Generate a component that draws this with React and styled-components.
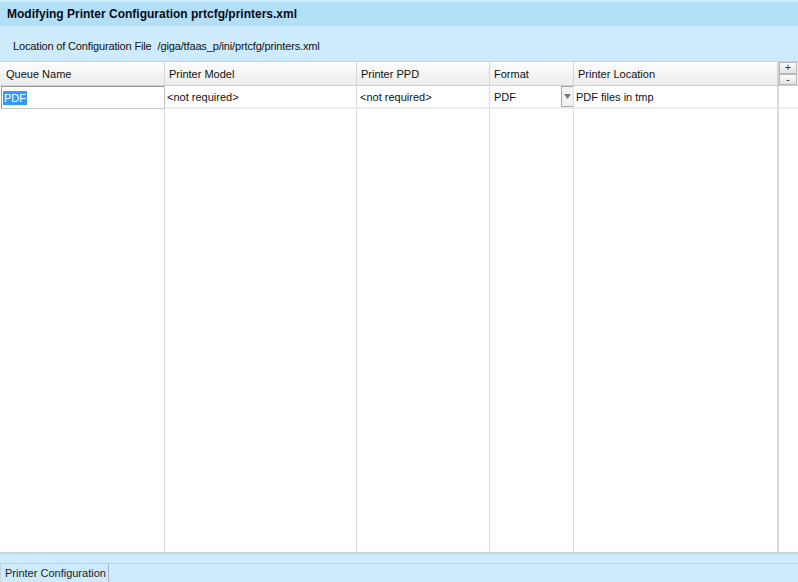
import React from "react";
import styled, { createGlobalStyle } from "styled-components";

const GlobalStyle = createGlobalStyle`
  html, body {
    margin: 0;
    padding: 0;
  }
  body {
    font-family: "Liberation Sans", Arial, sans-serif;
    background: #cdebfc;
    color: #000;
  }
`;

const columns = [
  { title: "Queue Name", width: 165, pad: 6 },
  { title: "Printer Model", width: 192, pad: 4 },
  { title: "Printer PPD", width: 133, pad: 4 },
  { title: "Format", width: 84, pad: 4 },
  { title: "Printer Location", width: 204, pad: 4 },
];

const gridCols = columns.map((c) => `${c.width}px`).join(" ") + " 1fr";

export default function App() {
  return (
    <Page>
      <GlobalStyle />
      <TitleBar>Modifying Printer Configuration prtcfg/printers.xml</TitleBar>
      <LocationRow>
        <span>Location of Configuration File</span>
        <span>/giga/tfaas_p/ini/prtcfg/printers.xml</span>
      </LocationRow>
      <Table>
        {columns.map((c) => (
          <HeadCell key={c.title} $pad={c.pad}>
            {c.title}
          </HeadCell>
        ))}
        <HeadCell $tools>
          <SmallButton>+</SmallButton>
          <SmallButton>-</SmallButton>
        </HeadCell>

        <Cell $edit>
          <Selected>PDF</Selected>
        </Cell>
        <Cell>&lt;not required&gt;</Cell>
        <Cell $pad={3}>&lt;not required&gt;</Cell>
        <Cell $pad={4}>
          <span>PDF</span>
          <DropArrow>
            <svg width="7" height="5" viewBox="0 0 7 5">
              <path d="M0 0 H7 L3.5 5 Z" fill="#777" />
            </svg>
          </DropArrow>
        </Cell>
        <Cell $pad={2}>PDF files in tmp</Cell>
        <Cell $last />

        {columns.map((c) => (
          <Filler key={c.title} />
        ))}
        <Filler $last />
      </Table>
      <TabBar>
        <Tab>Printer Configuration</Tab>
      </TabBar>
    </Page>
  );
}

const Page = styled.div`
  display: flex;
  flex-direction: column;
  width: 798px;
  height: 582px;
  overflow: hidden;
  background: #cdebfc;
`;

const TitleBar = styled.div`
  height: 24px;
  margin-top: 2px;
  background: #b2dff6;
  display: flex;
  align-items: center;
  padding-left: 7px;
  font-size: 12px;
  font-weight: bold;
  color: #0a0a1a;
`;

const LocationRow = styled.div`
  height: 35px;
  box-sizing: border-box;
  padding: 4px 0 0 13px;
  display: flex;
  align-items: center;
  gap: 6px;
  font-size: 11px;
  letter-spacing: -0.15px;
  color: #111;
`;

const Table = styled.div`
  flex: 1;
  display: grid;
  grid-template-columns: ${gridCols};
  grid-template-rows: 24px 23px 1fr;
  background: #fff;
  border-top: 1px solid #c6d4dc;
  border-bottom: 2px solid #c9d3d9;
  font-size: 11px;
`;

const HeadCell = styled.div`
  display: flex;
  align-items: center;
  padding-left: ${(p) => p.$pad ?? 4}px;
  background: linear-gradient(#fdfdfd, #ececec);
  border-right: 1px solid #d6d6d6;
  border-bottom: 1px solid #d0d0d0;
  color: #111;
  ${(p) =>
    p.$tools &&
    `
    flex-direction: column;
    align-items: flex-end;
    justify-content: center;
    padding: 0 1px 0 0;
    border-right: none;
    background: #f4f4f4;
    border-left: 1px solid #cfcfcf;
  `}
`;

const SmallButton = styled.div`
  width: 16px;
  height: 10px;
  border: 1px solid #b8b8b8;
  background: linear-gradient(#fafafa, #e2e2e2);
  font-size: 10px;
  line-height: 9px;
  text-align: center;
  color: #333;
`;

const Cell = styled.div`
  position: relative;
  display: flex;
  align-items: center;
  padding-left: ${(p) => p.$pad ?? 2}px;
  border-right: 1px solid #dcdcdc;
  border-bottom: 2px solid #ececec;
  color: #111;
  ${(p) =>
    p.$edit &&
    `
    margin-left: 1px;
    padding-left: 1px;
    border: 1px solid #9a9a9a;
    border-right-color: #c4c4c4;
    border-bottom-color: #c4c4c4;
  `}
  ${(p) => p.$last && `border-right: none; border-left: 1px solid #d8d8d8;`}
`;

const Selected = styled.span`
  background: #3399ff;
  color: #fff;
  padding: 0 1px;
  line-height: 14px;
`;

const DropArrow = styled.span`
  position: absolute;
  right: 0;
  top: 0;
  bottom: 0;
  width: 11px;
  border: 1px solid #a8a8a8;
  border-right: none;
  background: #f2f2f2;
  display: flex;
  align-items: center;
  justify-content: center;
`;

const Filler = styled.div`
  border-right: 1px solid #dcdcdc;
  ${(p) => p.$last && `border-right: none; border-left: 1px solid #d8d8d8;`}
`;

const TabBar = styled.div`
  margin-top: 9px;
  height: 18px;
  border-top: 1px solid #b9d4e4;
  display: flex;
`;

const Tab = styled.div`
  display: flex;
  align-items: center;
  padding: 0 2px 0 4px;
  font-size: 11px;
  color: #222;
  background: #cdebfc;
  border-right: 1px solid #a9b9c3;
  border-left: 1px solid #c3d3dd;
`;
